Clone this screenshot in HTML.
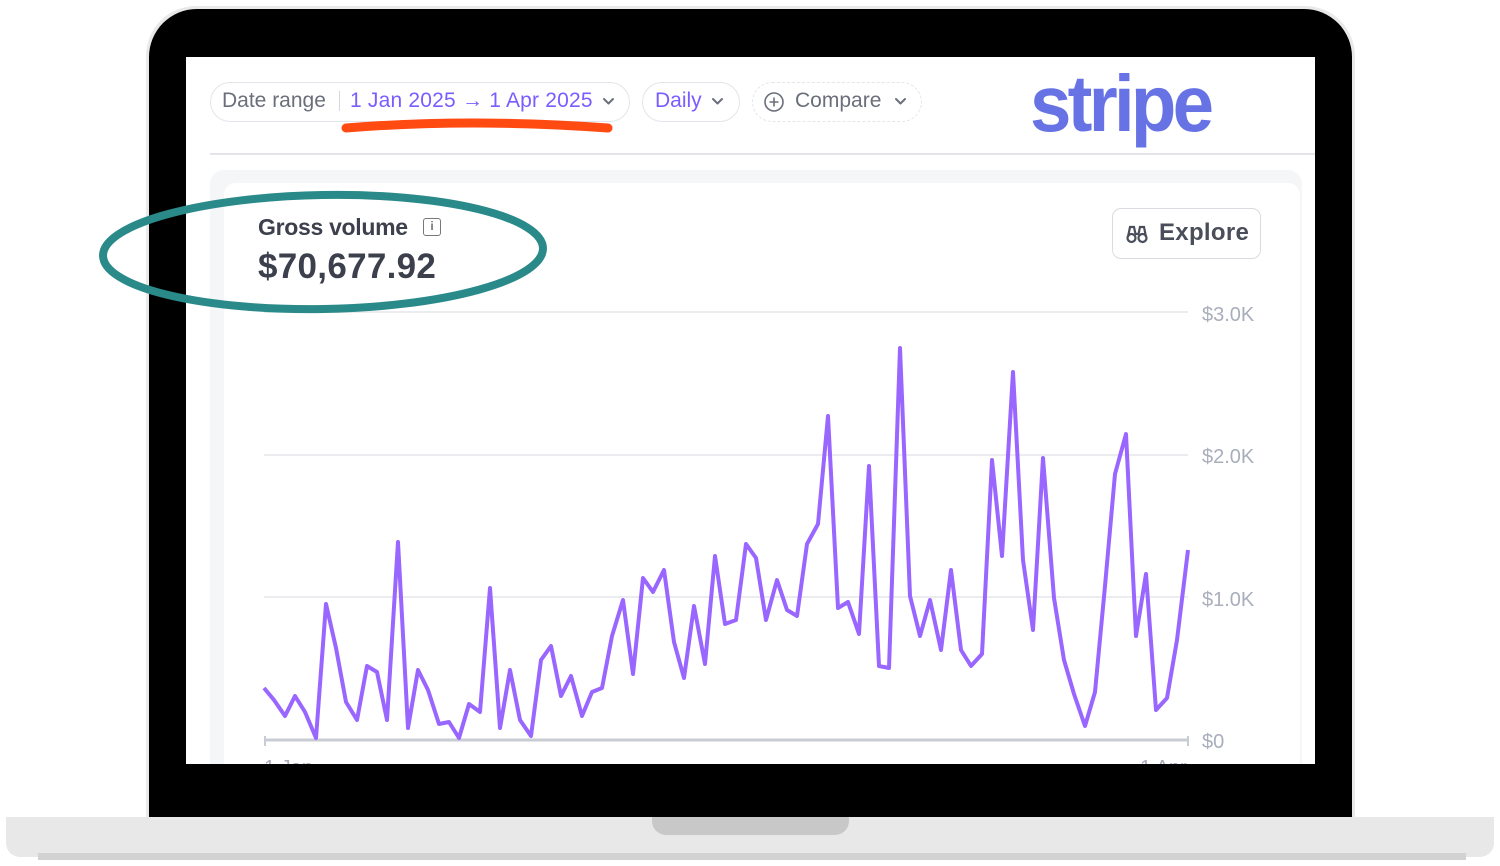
<!DOCTYPE html>
<html><head><meta charset="utf-8"><style>
*{margin:0;padding:0;box-sizing:border-box}
body{width:1500px;height:866px;background:#fff;position:relative;overflow:hidden;font-family:"Liberation Sans",sans-serif}
.abs{position:absolute;white-space:nowrap}
.pill{position:absolute;top:82px;height:40px;border:1.5px solid #e3e5ea;border-radius:20px}
.t{position:absolute;top:89px;font-size:21px;line-height:24px;color:#6b6f7b}
.blue{color:#7a5cff}
</style></head><body>
<div class="abs" style="left:146px;top:6px;width:1209px;height:815px;border-radius:50px 50px 0 0;background:#e9e9e9"></div>
<div class="abs" style="left:149px;top:9px;width:1203px;height:812px;border-radius:48px 48px 0 0;background:#000"></div>
<div class="abs" style="left:186px;top:57px;width:1129px;height:707px;background:#fff;overflow:hidden">
  <div class="abs" style="left:24px;top:96px;width:1105px;height:2px;background:#e3e5ea"></div>
  <div class="abs" style="left:24px;top:113px;width:1092px;height:620px;background:#f5f6f8;border-radius:14px"></div>
  <div class="abs" style="left:38px;top:126px;width:1076px;height:620px;background:#fff;border-radius:12px"></div>
  <div class="abs" style="left:72px;top:157px;font-size:23px;color:#3c404d;font-weight:bold;letter-spacing:-0.3px">Gross volume</div>
  <div class="abs" style="left:237px;top:161px;width:18px;height:18px;border:1.8px solid #777;border-radius:3px;font-size:12px;line-height:14px;text-align:center;font-weight:bold;color:#777">i</div>
  <div class="abs" style="left:72px;top:190px;font-size:35px;font-weight:bold;color:#3c404d;letter-spacing:0.3px">$70,677.92</div>
  <div class="abs" style="left:926px;top:151px;width:149px;height:51px;border:1.5px solid #d9dbe0;border-radius:9px;font-size:24px;line-height:48px;color:#4a4e5a;padding-left:46px;font-weight:bold;letter-spacing:0.3px">Explore</div>
  <svg class="abs" style="left:940px;top:167px" width="22" height="20" viewBox="0 0 22 20" fill="none" stroke="#4a4e5a" stroke-width="2.2"><circle cx="5.5" cy="14" r="4"/><circle cx="16.5" cy="14" r="4"/><path d="M2 13 L4 3 H8 L9.5 10 H12.5 L14 3 H18 L20 13"/></svg>
</div>
<div class="pill" style="left:210px;width:420px"></div>
<div class="t" style="left:222px">Date range</div>
<div class="abs" style="left:339px;top:91px;width:1px;height:20px;background:#d5d7dc"></div>
<div class="t blue" style="left:350px;letter-spacing:0.2px">1 Jan 2025 → 1 Apr 2025</div>
<div class="pill" style="left:642px;width:98px"></div>
<div class="t blue" style="left:655px">Daily</div>
<div class="pill" style="left:752px;width:170px;border-style:dashed"></div>
<svg class="abs" style="left:763px;top:91px" width="22" height="22" viewBox="0 0 22 22" fill="none" stroke="#6b6f7b" stroke-width="1.6"><circle cx="11" cy="11" r="9"/><path d="M11 6.5v9M6.5 11h9"/></svg>
<div class="t" style="left:795px">Compare</div>
<svg class="abs" style="left:0;top:0" width="1500" height="866">
  <g fill="none" stroke="#6b6f7b" stroke-width="2" stroke-linecap="round" stroke-linejoin="round"><path d="M604 99l4.5 4.5 4.5-4.5"/><path d="M713 99l4.5 4.5 4.5-4.5"/><path d="M896 99l4.5 4.5 4.5-4.5"/></g>
  <path d="M346 128 Q470 118 608 128" stroke="#ff4a12" stroke-width="9" fill="none" stroke-linecap="round"/>
  <g stroke="#ebecef" stroke-width="2"><line x1="264" y1="312" x2="1188" y2="312"/><line x1="264" y1="455" x2="1188" y2="455"/><line x1="264" y1="597" x2="1188" y2="597"/></g>
  <line x1="264" y1="740" x2="1188" y2="740" stroke="#c8ccd4" stroke-width="3"/>
  <line x1="265" y1="736" x2="265" y2="746" stroke="#c8ccd4" stroke-width="2"/><line x1="1188" y1="736" x2="1188" y2="746" stroke="#c8ccd4" stroke-width="2"/>
  <g fill="#a9aebb" font-size="20" font-family="Liberation Sans"><text x="1202" y="321">$3.0K</text><text x="1202" y="463">$2.0K</text><text x="1202" y="606">$1.0K</text><text x="1202" y="748">$0</text><text x="264" y="774">1 Jan</text><text x="1140" y="774">1 Apr</text></g>
  <polyline fill="none" stroke="#9966ff" stroke-width="4" stroke-linejoin="round" points="264,688 274,700 285,716 295,696 305,712 316,738 326,604 336,648 346,702 357,720 367,666 377,672 387,720 398,542 408,728 418,670 428,690 439,724 449,722 459,738 469,704 480,712 490,588 500,728 510,670 520,720 531,736 541,660 551,646 561,696 571,676 582,716 592,692 602,688 612,636 623,600 633,674 643,578 653,592 664,570 674,642 684,678 694,606 705,664 715,556 725,624 736,620 746,544 756,558 766,620 777,580 787,610 797,616 807,544 818,524 828,416 838,608 848,602 859,634 869,466 879,666 889,668 900,348 910,596 920,636 930,600 941,650 951,570 961,650 971,666 982,654 992,460 1002,556 1013,372 1023,560 1033,630 1043,458 1054,598 1064,660 1074,694 1085,726 1095,692 1105,586 1115,474 1126,434 1136,636 1146,574 1156,710 1167,698 1177,640 1188,550"/>
  <ellipse cx="323" cy="252" rx="220" ry="57" fill="none" stroke="#2a8a8a" stroke-width="8" transform="rotate(-1 323 252)"/>
</svg>
<div class="abs" style="left:186px;top:764px;width:1129px;height:53px;background:#000"></div>
<div class="abs" style="left:1030px;top:58px;font-size:80px;font-weight:bold;color:#6772e5;letter-spacing:-4px;transform:scaleX(0.93);transform-origin:left">stripe</div>
<div class="abs" style="left:6px;top:817px;width:1488px;height:40px;background:#e8e8e8;border-radius:0 0 14px 14px"></div>
<div class="abs" style="left:38px;top:853px;width:1428px;height:7px;background:#d2d2d2"></div>
<div class="abs" style="left:652px;top:817px;width:197px;height:18px;background:#c8c8c8;border-radius:0 0 14px 14px"></div>
</body></html>
